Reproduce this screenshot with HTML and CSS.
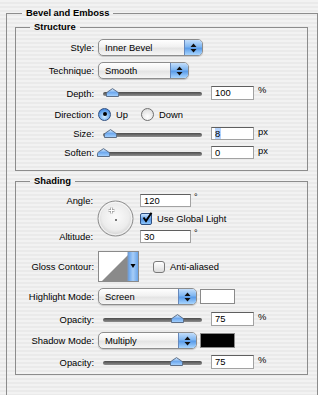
FILE: index.html
```html
<!DOCTYPE html>
<html>
<head>
<meta charset="utf-8">
<title>Bevel and Emboss</title>
<link rel="stylesheet" href="styles.css">
</head>
<body>
<fieldset class="group outer">
  <legend class="title title-outer">Bevel and Emboss</legend>

  <fieldset class="group inner structure">
    <legend class="title">Structure</legend>

    <div class="row h17">
      <span class="label">Style:</span>
      <div class="popup w-style"><span class="popup-text">Inner Bevel</span><span class="popup-arrows"><svg width="7" height="10" viewBox="0 0 7 10"><path d="M3.5 0.5 L6.5 4 L0.5 4 Z M0.5 6 L6.5 6 L3.5 9.5 Z" fill="#111"/></svg></span></div>
    </div>

    <div class="row h17">
      <span class="label">Technique:</span>
      <div class="popup w-tech"><span class="popup-text">Smooth</span><span class="popup-arrows"><svg width="7" height="10" viewBox="0 0 7 10"><path d="M3.5 0.5 L6.5 4 L0.5 4 Z M0.5 6 L6.5 6 L3.5 9.5 Z" fill="#111"/></svg></span></div>
    </div>

    <div class="row h16">
      <span class="label">Depth:</span>
      <div class="slider"><span class="track"></span><span class="thumbs"><span class="thumb" style="left:9%"><svg width="13" height="9" viewBox="0 0 13 9"><defs><linearGradient id="tg1" x1="0" y1="0" x2="0" y2="1"><stop offset="0" stop-color="#d8ecff"/><stop offset="0.5" stop-color="#6fa9ee"/><stop offset="1" stop-color="#a9d4ff"/></linearGradient></defs><path d="M0.5 8.5 L0.5 5.5 Q0.5 4.5 1.5 4 L6.5 0.6 L11.5 4 Q12.5 4.5 12.5 5.5 L12.5 8.5 Z" fill="url(#tg1)" stroke="#5d6f88"/></svg></span></span></div>
      <span class="field">100</span><span class="unit">%</span>
    </div>

    <div class="row h14">
      <span class="label">Direction:</span>
      <span class="radio on"></span><span class="opt">Up</span>
      <span class="radio"></span><span class="opt">Down</span>
    </div>

    <div class="row h13">
      <span class="label">Size:</span>
      <div class="slider"><span class="track"></span><span class="thumbs"><span class="thumb" style="left:7%"><svg width="13" height="9" viewBox="0 0 13 9"><path d="M0.5 8.5 L0.5 5.5 Q0.5 4.5 1.5 4 L6.5 0.6 L11.5 4 Q12.5 4.5 12.5 5.5 L12.5 8.5 Z" fill="url(#tg1)" stroke="#5d6f88"/></svg></span></span></div>
      <span class="field"><span class="sel">8</span></span><span class="unit">px</span>
    </div>

    <div class="row h13">
      <span class="label">Soften:</span>
      <div class="slider"><span class="track"></span><span class="thumbs"><span class="thumb" style="left:0%"><svg width="13" height="9" viewBox="0 0 13 9"><path d="M0.5 8.5 L0.5 5.5 Q0.5 4.5 1.5 4 L6.5 0.6 L11.5 4 Q12.5 4.5 12.5 5.5 L12.5 8.5 Z" fill="url(#tg1)" stroke="#5d6f88"/></svg></span></span></div>
      <span class="field">0</span><span class="unit">px</span>
    </div>
  </fieldset>

  <fieldset class="group inner shading">
    <legend class="title">Shading</legend>

    <div class="angle-block">
      <span class="label a1">Angle:</span>
      <div class="dial">
        <svg width="37" height="37" viewBox="0 0 37 37">
          <defs>
            <radialGradient id="dg" cx="0.5" cy="0.45" r="0.55">
              <stop offset="0" stop-color="#fbfbfb"/>
              <stop offset="0.7" stop-color="#ececec"/>
              <stop offset="1" stop-color="#cfcfcf"/>
            </radialGradient>
          </defs>
          <circle cx="18.5" cy="18.5" r="17.5" fill="url(#dg)" stroke="#8d8d8d"/>
          <circle cx="18.5" cy="18.5" r="16.3" fill="none" stroke="#ffffff" stroke-opacity="0.7"/>
          <path d="M14.5 7.5 V13.5 M11.5 10.5 H17.5" stroke="#9a9a9a" stroke-width="2.4"/>
          <path d="M14.5 7.5 V13.5 M11.5 10.5 H17.5" stroke="#ffffff" stroke-width="1"/>
          <rect x="18" y="19" width="2" height="2" fill="#777"/>
        </svg>
      </div>
      <div class="ctl r1"><span class="field w-angle">120</span><span class="deg">°</span></div>
      <div class="ctl r2"><span class="check on"><svg width="12" height="12" viewBox="0 0 12 12"><path d="M2.5 5.5 L5 9 L10.5 0.8" fill="none" stroke="#000" stroke-width="2"/></svg></span><span class="opt">Use Global Light</span></div>
      <span class="label a3">Altitude:</span>
      <div class="ctl r3"><span class="field w-angle">30</span><span class="deg">°</span></div>
    </div>

    <div class="row h30 gloss">
      <span class="label">Gloss Contour:</span>
      <span class="contour">
        <svg width="41" height="31" viewBox="0 0 41 31">
          <defs>
            <linearGradient id="cb" x1="0" y1="0" x2="1" y2="0">
              <stop offset="0" stop-color="#5f9ee9"/>
              <stop offset="0.5" stop-color="#a7cdf7"/>
              <stop offset="1" stop-color="#6aa5ea"/>
            </linearGradient>
          </defs>
          <rect x="0.5" y="0.5" width="40" height="30" fill="#ffffff" stroke="#8a8a8a"/>
          <polygon points="4,30 30,4 30,30" fill="#8a8a8a"/>
          <rect x="30" y="1" width="10" height="29" fill="url(#cb)"/>
          <line x1="30" y1="1" x2="30" y2="30" stroke="#7f9cc4"/>
          <path d="M32.5 13 L37.5 13 L35 17 Z" fill="#000"/>
        </svg>
      </span>
      <span class="check"></span><span class="opt">Anti-aliased</span>
    </div>

    <div class="row h17 mt7">
      <span class="label">Highlight Mode:</span>
      <div class="popup w-mode"><span class="popup-text">Screen</span><span class="popup-arrows"><svg width="7" height="10" viewBox="0 0 7 10"><path d="M3.5 0.5 L6.5 4 L0.5 4 Z M0.5 6 L6.5 6 L3.5 9.5 Z" fill="#111"/></svg></span></div>
      <span class="swatch white"></span>
    </div>

    <div class="row h14 mt7">
      <span class="label">Opacity:</span>
      <div class="slider"><span class="track"></span><span class="thumbs"><span class="thumb" style="left:75%"><svg width="13" height="9" viewBox="0 0 13 9"><path d="M0.5 8.5 L0.5 5.5 Q0.5 4.5 1.5 4 L6.5 0.6 L11.5 4 Q12.5 4.5 12.5 5.5 L12.5 8.5 Z" fill="url(#tg1)" stroke="#5d6f88"/></svg></span></span></div>
      <span class="field">75</span><span class="unit">%</span>
    </div>

    <div class="row h17 mt6">
      <span class="label">Shadow Mode:</span>
      <div class="popup w-mode"><span class="popup-text">Multiply</span><span class="popup-arrows"><svg width="7" height="10" viewBox="0 0 7 10"><path d="M3.5 0.5 L6.5 4 L0.5 4 Z M0.5 6 L6.5 6 L3.5 9.5 Z" fill="#111"/></svg></span></div>
      <span class="swatch black"></span>
    </div>

    <div class="row h14 mt6">
      <span class="label">Opacity:</span>
      <div class="slider"><span class="track"></span><span class="thumbs"><span class="thumb" style="left:74%"><svg width="13" height="9" viewBox="0 0 13 9"><path d="M0.5 8.5 L0.5 5.5 Q0.5 4.5 1.5 4 L6.5 0.6 L11.5 4 Q12.5 4.5 12.5 5.5 L12.5 8.5 Z" fill="url(#tg1)" stroke="#5d6f88"/></svg></span></span></div>
      <span class="field">75</span><span class="unit">%</span>
    </div>
  </fieldset>
</fieldset>
</body>
</html>
```

FILE: styles.css
```css
* { box-sizing: border-box; }
html, body { margin: 0; }
body {
  width: 318px;
  height: 395px;
  overflow: hidden;
  padding: 7px 0 0 6px;
  font-family: "Liberation Sans", Arial, sans-serif;
  font-size: 9.4px;
  color: #000;
  background: repeating-linear-gradient(to bottom, #f2f2f2 0, #f2f2f2 2px, #eaeaea 2px, #eaeaea 4px);
}

fieldset.group {
  margin: 0;
  min-width: 0;
  border: 1px solid #8c8c8c;
}
fieldset.outer {
  width: 312px;
  padding: 2px 9px 20px 8px;
}
fieldset.inner {
  width: 293px;
  padding: 0 0 8px 0;
}
fieldset.structure { padding-top: 6px; padding-bottom: 11px; }
fieldset.shading { margin-top: 4px; padding-top: 0; padding-bottom: 5px; }

.title {
  font-weight: bold;
  font-size: 9.4px;
  line-height: 12px;
  padding: 0 4px;
  margin-left: 14px;
}
.title-outer { margin-left: 7px; }

.structure { display: flex; flex-direction: column; gap: 6px; }

.row { display: flex; align-items: center; }
.h13 { height: 13px; }
.h14 { height: 14px; }
.h16 { height: 16px; }
.h17 { height: 17px; }
.h30 { height: 30px; }
.mt6 { margin-top: 6px; }
.mt7 { margin-top: 7px; }
.mt8 { margin-top: 8px; }

.label {
  flex: none;
  width: 78px;
  margin-right: 4px;
  text-align: right;
  white-space: nowrap;
}

/* popup buttons */
.popup {
  display: flex;
  height: 17px;
  border: 1px solid #8d8d8d;
  border-radius: 5px;
  overflow: hidden;
  background: linear-gradient(#ffffff, #f1f1f1 45%, #e4e4e4 55%, #f6f6f6);
  box-shadow: 0 1px 1px rgba(0,0,0,0.18);
  flex: none;
}
.w-style { width: 105px; }
.w-tech { width: 91px; }
.w-mode { width: 99px; }
.popup-text { flex: 1; padding-left: 6px; line-height: 15px; }
.popup-arrows {
  width: 18px;
  border-left: 1px solid #6688bb;
  background: linear-gradient(#c3defb, #7fb6f1 45%, #5a9ce9 55%, #a9d6ff);
  display: flex;
  align-items: center;
  justify-content: center;
}

/* sliders */
.slider { position: relative; flex: none; width: 106px; height: 100%; margin-right: 7px; }
.track {
  position: absolute;
  left: 5px; right: 2px;
  top: 50%;
  height: 4px;
  margin-top: -1px;
  border-radius: 2px;
  background: linear-gradient(#4b4b4b, #8e8e8e);
}
.thumbs { position: absolute; left: 5px; right: 2px; top: 0; bottom: 0; }
.thumb { position: absolute; top: 50%; margin-top: -5px; margin-left: -6px; width: 13px; height: 9px; }
.thumb svg { display: block; }

/* fields */
.field {
  flex: none;
  display: block;
  width: 43px;
  height: 14px;
  padding-left: 3px;
  line-height: 12px;
  background: #fff;
  border: 1px solid #a2a2a2;
  border-top-color: #5f5f5f;
}
.h13 .field { height: 13px; line-height: 11px; }
.w-angle { width: 51px; height: 13px; line-height: 11px; }
.sel { background: #b5d3fd; padding: 0 1px 0 0; }
.unit { margin-left: 4px; align-self: flex-start; line-height: 10px; }
.deg { margin-left: 3px; align-self: flex-start; line-height: 6px; font-size: 9px; }

/* radios & checks */
.radio {
  flex: none;
  position: relative;
  width: 13px; height: 13px;
  border-radius: 50%;
  border: 1px solid #6f6f6f;
  background: radial-gradient(circle at 50% 70%, #ffffff, #e6e6e6 60%, #cfcfcf);
}
.radio.on {
  border-color: #2f4f80;
  background: radial-gradient(circle at 50% 70%, #d2ecff, #6ba9ee 55%, #2c6fcf);
}
.radio.on::after {
  content: "";
  position: absolute;
  left: 3.5px; top: 3.5px;
  width: 4px; height: 4px;
  border-radius: 50%;
  background: #000;
}
.opt { margin-left: 5px; margin-right: 13px; white-space: nowrap; }

.check {
  flex: none;
  position: relative;
  width: 12px; height: 12px;
  border: 1px solid #7a7a7a;
  border-radius: 2px;
  background: linear-gradient(#ffffff, #dcdcdc);
}
.check.on {
  border-color: #2f4f80;
  background: linear-gradient(#c9e4ff, #5b9be8 55%, #8ac3fa);
}
.check svg { position: absolute; left: 0; top: -2px; }

/* angle block */
.angle-block {
  display: grid;
  grid-template-columns: 78px 46px 1fr;
  grid-template-rows: 13px 13px 13px;
  row-gap: 5px;
  margin-top: 7px;
}
.angle-block .label { width: auto; margin-right: 0; padding-right: 1px; display: flex; align-items: center; justify-content: flex-end; }
.a1 { grid-column: 1; grid-row: 1; }
.a3 { grid-column: 1; grid-row: 3; }
.dial { grid-column: 2; grid-row: 1 / 4; align-self: center; margin-left: 3px; height: 37px; }
.dial svg { display: block; }
.ctl { display: flex; align-items: center; grid-column: 3; }
.r1 { grid-row: 1; }
.r2 { grid-row: 2; }
.r3 { grid-row: 3; }
.r2 .opt { margin-left: 5px; }

/* gloss contour row */
.gloss { margin-top: 8px; }
.contour { flex: none; width: 41px; height: 31px; margin-right: 14px; }
.contour svg { display: block; }
.gloss .check { margin-top: 1px; border-radius: 3px; }

/* swatches */
.swatch { flex: none; width: 35px; height: 15px; margin-left: 3px; border: 1px solid #8a8a8a; }
.swatch.white { background: #fff; }
.swatch.black { background: #000; }
```
